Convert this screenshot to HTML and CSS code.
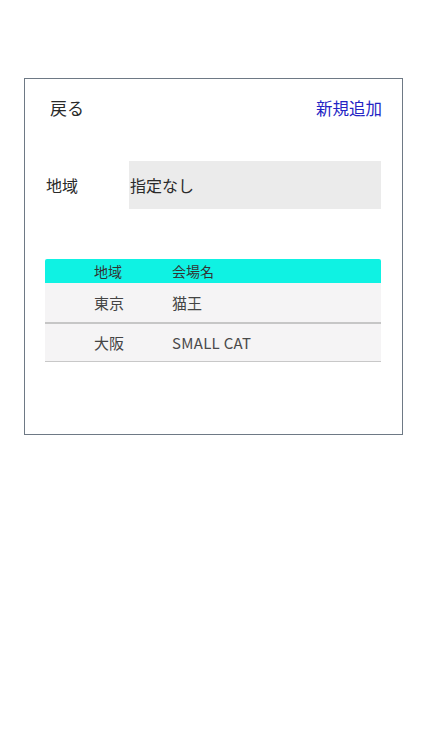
FILE: index.html
```html
<!DOCTYPE html>
<html lang="ja">
<head>
<meta charset="utf-8">
<link rel="stylesheet" href="styles.css">
</head>
<body>
<div class="panel">
  <div class="topbar">
    <span class="back">戻る</span>
    <span class="add">新規追加</span>
  </div>
  <div class="form-row">
    <span class="label">地域</span>
    <div class="select">指定なし</div>
  </div>
  <div class="table">
    <div class="row head">
      <span class="c1">地域</span>
      <span class="c2">会場名</span>
    </div>
    <div class="row item first">
      <span class="c1">東京</span>
      <span class="c2">猫王</span>
    </div>
    <div class="row item last">
      <span class="c1">大阪</span>
      <span class="c2 latin">SMALL CAT</span>
    </div>
  </div>
</div>
</body>
</html>
```
FILE: styles.css
```css
html, body {
  margin: 0;
  padding: 0;
  background: #ffffff;
}
body {
  font-family: "Noto Sans CJK JP", "Noto Sans", sans-serif;
  color: #2a2a2a;
}
.panel {
  box-sizing: border-box;
  margin: 78px 0 0 24px;
  width: 379px;
  height: 357px;
  border: 1px solid #6e7985;
  padding: 0;
}
.topbar {
  display: flex;
  justify-content: space-between;
  align-items: center;
  height: 56px;
  padding: 0 20px 0 25px;
}
.back {
  font-size: 17px;
  color: #2a2a2a;
}
.add {
  font-size: 16.5px;
  color: #2424c4;
  margin-top: 1px;
}
.form-row {
  display: flex;
  align-items: center;
  margin-top: 26px;
  padding-left: 21px;
}
.label {
  font-size: 16px;
  width: 83px;
  color: #2a2a2a;
}
.select {
  box-sizing: border-box;
  width: 252px;
  height: 48px;
  background: #ebebeb;
  display: flex;
  align-items: center;
  padding-left: 1px;
  font-size: 16px;
  color: #2a2a2a;
}
.table {
  margin: 50px 0 0 20px;
  width: 336px;
}
.row {
  display: flex;
  align-items: center;
  color: #444;
}
.c1 {
  width: 78px;
  padding-left: 49px;
}
.c2 {
  flex: 1;
}
.head {
  height: 24px;
  background: #0ff2e3;
  border-radius: 2px 2px 0 0;
  font-size: 14px;
  color: #333;
}
.item {
  background: #f5f4f5;
  font-size: 15px;
}
.first {
  height: 39px;
  border-bottom: 2px solid #c6c6c6;
}
.last {
  height: 37px;
  border-bottom: 1px solid #c8c8c8;
}
.latin {
  letter-spacing: 0.3px;
  color: #4a4a4a;
}
```
